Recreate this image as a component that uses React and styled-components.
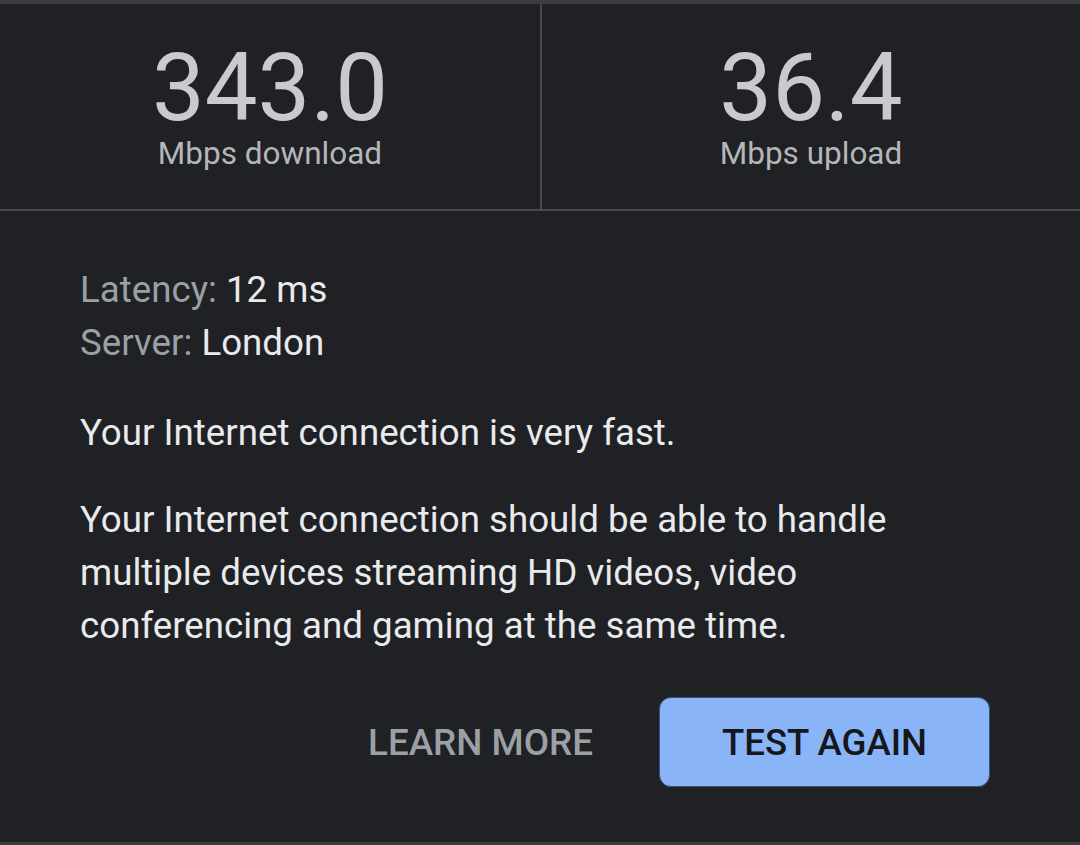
import React from "react";
import styled, { createGlobalStyle } from "styled-components";

const Global = createGlobalStyle`
  html, body { margin: 0; padding: 0; background: #202124; }
  body { font-family: Roboto, "Noto Sans", "Liberation Sans", sans-serif; }
  * { box-sizing: border-box; }
`;

const Page = styled.div`
  width: 1080px;
  height: 845px;
  background: #202124;
  border-top: 4px solid #3c3d42;
  border-bottom: 3px solid #3c3d42;
  display: flex;
  flex-direction: column;
`;

const Stats = styled.div`
  display: grid;
  grid-template-columns: 540px 1fr;
  height: 207px;
  border-bottom: 2px solid #48494e;
`;

const StatCell = styled.div`
  display: flex;
  flex-direction: column;
  align-items: center;
  justify-content: center;
  padding-bottom: 2px;
  border-left: ${(p) => (p.$divided ? "2px solid #48494e" : "none")};
`;

const Value = styled.div`
  font-size: 94px;
  line-height: 92px;
  color: #c9cacc;
  font-weight: 400;
`;

const Unit = styled.div`
  font-size: 31.5px;
  line-height: 32px;
  color: #b4b6b9;
  margin-top: 4px;
`;

const Body = styled.div`
  flex: 1;
  padding: 52px 80px 0 80px;
  display: flex;
  flex-direction: column;
`;

const InfoLine = styled.div`
  font-size: 36.7px;
  line-height: 53px;
  color: #e8eaed;
`;

const Key = styled.span`
  color: #9aa0a6;
`;

const Text = styled.p`
  margin: ${(p) => p.$mt}px 0 0 0;
  font-size: 36.7px;
  line-height: 53px;
  color: #e8eaed;
`;

const Actions = styled.div`
  display: flex;
  justify-content: flex-end;
  align-items: center;
  gap: 42px;
  margin-top: 45px;
  margin-right: 10px;
`;

const TextButton = styled.button`
  background: none;
  border: none;
  font-family: inherit;
  font-weight: 500;
  font-size: 36.8px;
  color: #9aa0a6;
  padding: 0 24px;
  height: 90px;
`;

const FilledButton = styled.button`
  width: 331px;
  height: 90px;
  border-radius: 12px;
  border: 1px solid #3e5271;
  background: #8ab4f8;
  color: #15171c;
  font-family: inherit;
  font-weight: 500;
  font-size: 36.6px;
`;

export default function App() {
  return (
    <>
      <Global />
      <Page>
        <Stats>
          <StatCell>
            <Value>343.0</Value>
            <Unit>Mbps download</Unit>
          </StatCell>
          <StatCell $divided>
            <Value>36.4</Value>
            <Unit>Mbps upload</Unit>
          </StatCell>
        </Stats>
        <Body>
          <InfoLine>
            <Key>Latency:</Key> 12 ms
          </InfoLine>
          <InfoLine>
            <Key>Server:</Key> London
          </InfoLine>
          <Text $mt={37}>Your Internet connection is very fast.</Text>
          <Text $mt={34}>
            Your Internet connection should be able to handle
            <br />
            multiple devices streaming HD videos, video
            <br />
            conferencing and gaming at the same time.
          </Text>
          <Actions>
            <TextButton>LEARN MORE</TextButton>
            <FilledButton>TEST AGAIN</FilledButton>
          </Actions>
        </Body>
      </Page>
    </>
  );
}
